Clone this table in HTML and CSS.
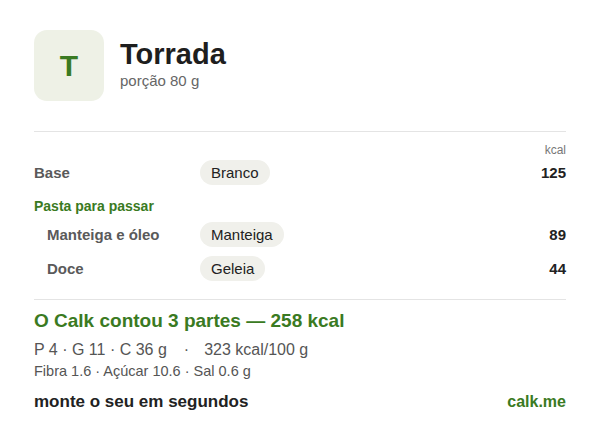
FILE: index.html
```html
<!DOCTYPE html>
<html lang="pt">
<head>
<meta charset="utf-8">
<link rel="stylesheet" href="styles.css">
</head>
<body>
<div class="card">
  <header class="head">
    <div class="avatar">T</div>
    <div class="titles">
      <h1 class="title">Torrada</h1>
      <div class="portion">porção 80 g</div>
    </div>
  </header>
  <hr class="rule rule-top">
  <div class="unit">kcal</div>
  <div class="row">
    <span class="label">Base</span>
    <span class="pill-cell"><span class="pill">Branco</span></span>
    <span class="kcal">125</span>
  </div>
  <div class="group">Pasta para passar</div>
  <div class="row sub">
    <span class="label">Manteiga e óleo</span>
    <span class="pill-cell"><span class="pill">Manteiga</span></span>
    <span class="kcal">89</span>
  </div>
  <div class="row sub">
    <span class="label">Doce</span>
    <span class="pill-cell"><span class="pill">Geleia</span></span>
    <span class="kcal">44</span>
  </div>
  <hr class="rule rule-bottom">
  <div class="total">O Calk contou 3 partes — 258 kcal</div>
  <div class="macros">P 4 · G 11 · C 36 g<span class="sep">·</span>323 kcal/100 g</div>
  <div class="extra">Fibra 1.6 · Açúcar 10.6 · Sal 0.6 g</div>
  <footer class="foot">
    <span class="cta">monte o seu em segundos</span>
    <span class="brand">calk.me</span>
  </footer>
</div>
</body>
</html>
```

FILE: styles.css
```css
* { box-sizing: border-box; }
html, body { margin: 0; padding: 0; background: #ffffff; }
body {
  font-family: "Liberation Sans", Arial, Helvetica, sans-serif;
  color: #222;
}
.card {
  width: 600px;
  padding: 30px 34px 0 34px;
}
.head {
  display: flex;
  align-items: center;
  gap: 16px;
}
.avatar {
  width: 70px;
  height: 71px;
  border-radius: 13px;
  background: #eef1e6;
  color: #3a7a22;
  font-weight: bold;
  font-size: 30px;
  display: flex;
  align-items: center;
  justify-content: center;
}
.titles { margin-top: -4px; }
.title {
  margin: 0;
  font-size: 29px;
  line-height: 32px;
  font-weight: bold;
  color: #1e1e1e;
}
.portion {
  margin-top: 2px;
  font-size: 15px;
  line-height: 18px;
  color: #666;
}
.rule {
  border: 0;
  height: 1px;
  background: #e4e4e4;
  margin: 0;
}
.rule-top { margin-top: 30px; }
.unit {
  margin-top: 11px;
  text-align: right;
  font-size: 12px;
  line-height: 14px;
  color: #777;
}
.row {
  display: grid;
  grid-template-columns: 166px 1fr auto;
  align-items: center;
  height: 26px;
  margin-top: 8px;
}
.unit + .row { margin-top: 2px; }
.row.sub .label { padding-left: 13px; }
.label {
  font-size: 15px;
  font-weight: bold;
  color: #5a5a5a;
}
.pill {
  display: inline-block;
  background: #f0f0eb;
  border-radius: 13px;
  padding: 0 11px;
  height: 25px;
  line-height: 25px;
  font-size: 15px;
  color: #222;
}
.kcal {
  font-size: 15px;
  font-weight: bold;
  color: #222;
  text-align: right;
}
.group {
  margin-top: 13px;
  font-size: 14px;
  line-height: 16px;
  font-weight: bold;
  color: #3a7a22;
}
.group + .row { margin-top: 7px; }
.rule-bottom { margin-top: 18px; }
.total {
  margin-top: 10px;
  font-size: 19px;
  line-height: 22px;
  font-weight: bold;
  color: #3a7a22;
}
.macros {
  margin-top: 8px;
  font-size: 16px;
  line-height: 20px;
  color: #555;
}
.sep { padding: 0 15px 0 17px; }
.extra {
  margin-top: 3px;
  font-size: 14.5px;
  line-height: 16px;
  color: #555;
}
.foot {
  margin-top: 13px;
  display: flex;
  justify-content: space-between;
  align-items: baseline;
  line-height: 20px;
}
.cta {
  font-size: 17px;
  font-weight: bold;
  color: #222;
}
.brand {
  font-size: 16px;
  font-weight: bold;
  color: #3a7a22;
}
```
